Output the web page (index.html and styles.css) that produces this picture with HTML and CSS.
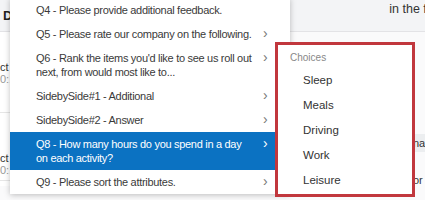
FILE: index.html
```html
<!DOCTYPE html>
<html lang="en">
<head>
    <meta charset="UTF-8">
    <title>Question picker</title>
    <link rel="stylesheet" href="styles.css">
</head>
<body>
    <div class="page">
        <div class="topbar">
            <span class="col-title">D</span>
            <span class="intro">in the following</span>
        </div>
        <div class="body-rows">
            <div class="left-col">
                <div class="entry">
                    <div class="entry-name">ct</div>
                    <div class="entry-time">0:1</div>
                </div>
                <div class="entry">
                    <div class="entry-name">ct</div>
                    <div class="entry-time">0:1</div>
                </div>
            </div>
            <div class="right-col">
                <div class="field">na</div>
                <div class="field-plain">or</div>
            </div>
        </div>
    </div>

    <ul class="menu">
        <li class="menu-item">Q4 - Please provide additional feedback.</li>
        <li class="menu-item has-sub">Q5 - Please rate our company on the following.</li>
        <li class="menu-item has-sub">Q6 - Rank the items you'd like to see us roll out next, from would most like to...</li>
        <li class="menu-item has-sub">SidebySide#1 - Additional</li>
        <li class="menu-item has-sub">SidebySide#2 - Answer</li>
        <li class="menu-item has-sub active">Q8 - How many hours do you spend in a day on each activity?</li>
        <li class="menu-item has-sub">Q9 - Please sort the attributes.</li>
    </ul>

    <div class="submenu">
        <div class="submenu-label">Choices</div>
        <ul class="choices">
            <li>Sleep</li>
            <li>Meals</li>
            <li>Driving</li>
            <li>Work</li>
            <li>Leisure</li>
        </ul>
    </div>
</body>
</html>
```

FILE: styles.css
```css
body {
    margin: 0;
    width: 425px;
    height: 200px;
    overflow: hidden;
    position: relative;
    font-family: "Liberation Sans", Arial, sans-serif;
    color: #333;
    background-color: #fafafb;
}
ul {
    list-style: none;
    margin: 0;
    padding: 0;
}
.page {
    height: 200px;
    overflow: hidden;
}
.topbar {
    height: 31px;
    background-color: #f3f4f6;
    border-bottom: 1px solid #e3e3e6;
    display: flex;
    align-items: center;
    justify-content: space-between;
    white-space: nowrap;
    overflow: hidden;
}
.col-title {
    font-weight: bold;
    font-size: 13px;
    padding-left: 3px;
    color: #222;
}
.intro {
    font-size: 12.5px;
    margin-right: -47px;
    margin-top: -14px;
}
.body-rows {
    display: flex;
    justify-content: space-between;
}
.left-col {
    width: 12px;
    background: #fff;
    padding-top: 29px;
}
.entry {
    font-size: 11px;
    line-height: 12px;
    padding-bottom: 27px;
    border-bottom: 1px solid #e6e6e6;
    margin-bottom: 39px;
}
.entry:last-child {
    margin-bottom: 0;
    padding-bottom: 4px;
}
.entry-time {
    color: #999;
}
.right-col {
    width: 12px;
    padding-top: 102px;
    font-size: 11px;
}
.field {
    background: #eceef0;
    height: 18px;
    line-height: 18px;
}
.field-plain {
    margin-top: 22px;
    line-height: 12px;
}
.menu {
    position: absolute;
    left: 10px;
    top: -2px;
    width: 280px;
    background: #fff;
    box-shadow: 0 1px 6px rgba(0,0,0,0.25);
    font-size: 11px;
    letter-spacing: -0.3px;
    line-height: 14px;
}
.menu-item {
    position: relative;
    padding: 5px 38px 5px 26px;
    color: #3a3a3a;
}
.menu-item.has-sub::after {
    content: "\203A";
    position: absolute;
    left: 253px;
    top: 4px;
    font-size: 14px;
    color: #777;
}
.menu-item.active {
    background-color: #0b72c2;
    color: #fff;
}
.menu-item.active::after {
    color: #fff;
}
.submenu {
    position: absolute;
    left: 275px;
    top: 42px;
    width: 140px;
    height: 155px;
    box-sizing: border-box;
    border: 3px solid #c1373d;
    background: #fff;
    padding: 7px 0 0 12px;
}
.submenu-label {
    font-size: 10px;
    line-height: 12px;
    color: #888;
}
.choices {
    padding: 4px 0 0 13px;
    font-size: 11.5px;
    line-height: 25px;
    color: #333;
}
```
